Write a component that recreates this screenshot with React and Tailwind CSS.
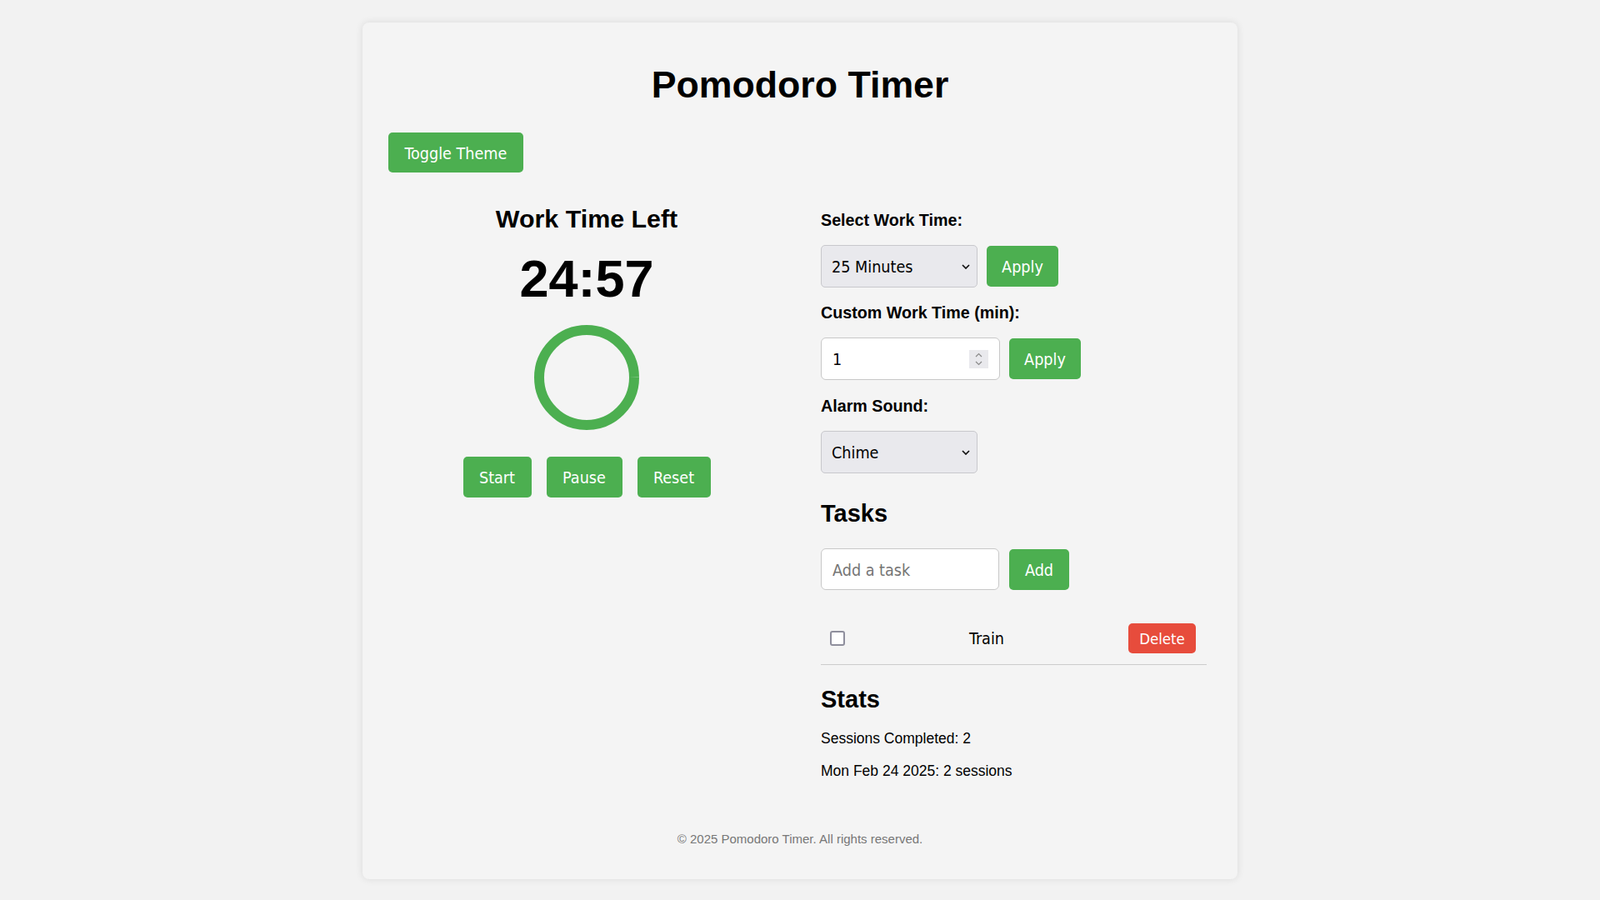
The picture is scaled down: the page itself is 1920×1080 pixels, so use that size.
import React from 'react';

const uiFont = "font-['DejaVu_Sans_Condensed','DejaVu_Sans',sans-serif]";

function GreenButton({ children, className = '' }) {
  return (
    <button
      className={`${uiFont} flex items-center justify-center rounded-[5px] bg-[#4caf50] pt-[3px] text-[19.6px] text-white ${className}`}
    >
      {children}
    </button>
  );
}

function Chevron() {
  return (
    <svg width="10" height="6" viewBox="0 0 10 6" className="shrink-0">
      <path d="M1 1l4 4 4-4" fill="none" stroke="#111" strokeWidth="1.7" />
    </svg>
  );
}

function FakeSelect({ value }) {
  return (
    <div
      className={`${uiFont} flex h-[51px] w-[188px] items-center justify-between rounded-[5px] border border-[#c8c8cc] bg-[#e9e9ed] pl-[12px] pr-[8px] text-[19.6px] text-black`}
    >
      <span className="pt-[3px]">{value}</span>
      <Chevron />
    </div>
  );
}

function ProgressRing() {
  const r = 57;
  const c = 2 * Math.PI * r;
  const remaining = 1497 / 1500;
  return (
    <svg width="126" height="126" viewBox="0 0 126 126">
      <circle
        cx="63"
        cy="63"
        r={r}
        fill="none"
        stroke="#4caf50"
        strokeWidth="12"
        strokeDasharray={c}
        strokeDashoffset={c * (1 - remaining)}
      />
    </svg>
  );
}

export default function App() {
  return (
    <div className="min-h-screen bg-[#f2f2f2] pt-[27px] pb-[24px] font-['Liberation_Sans',Arial,sans-serif] text-black">
      <div className="mx-auto w-[1050px] rounded-[8px] bg-[#f4f4f4] px-[31px] pt-[50px] pb-[40px] shadow-[0_0_10px_rgba(0,0,0,0.1)]">
        <h1 className="text-center text-[44.7px] font-bold leading-[50px]">Pomodoro Timer</h1>

        <GreenButton className="mt-[32px] h-[48px] w-[162px]">Toggle Theme</GreenButton>

        <div className="mt-[35px] flex items-start">
          {/* Timer column */}
          <div className="flex w-[476px] flex-col items-center">
            <h2 className="pt-[2px] text-[30.4px] font-bold leading-[36px]">Work Time Left</h2>
            <div className="mt-[18px] text-[63px] font-bold leading-[72px]">24:57</div>
            <div className="mt-[20px]">
              <ProgressRing />
            </div>
            <div className="mt-[32px] flex gap-[18px]">
              <GreenButton className="h-[49px] w-[82px]">Start</GreenButton>
              <GreenButton className="h-[49px] w-[91px]">Pause</GreenButton>
              <GreenButton className="h-[49px] w-[88px]">Reset</GreenButton>
            </div>
          </div>

          {/* Settings column */}
          <div className="ml-[43px] w-[463px] pt-[11px]">
            <label className="block text-[19.7px] font-bold leading-[23px]">Select Work Time:</label>
            <div className="mt-[18px] flex items-center gap-[11px]">
              <FakeSelect value="25 Minutes" />
              <GreenButton className="h-[49px] w-[86px]">Apply</GreenButton>
            </div>

            <label className="mt-[19px] block text-[19.7px] font-bold leading-[23px]">Custom Work Time (min):</label>
            <div className="mt-[18px] flex items-center gap-[11px]">
              <div
                className={`${uiFont} flex h-[51px] w-[215px] items-center justify-between rounded-[6px] border border-[#c8c8c8] bg-white pl-[13px] pr-[13px] text-[19.6px]`}
              >
                <span className="pt-[3px]">1</span>
                <div className="flex h-[22px] w-[23px] items-center justify-center bg-[#e9e9ed]">
                  <svg width="9" height="16" viewBox="0 0 9 16">
                    <path d="M1 5l3.5-3.5L8 5" fill="none" stroke="#8a8a8a" strokeWidth="1.2" />
                    <path d="M1 11l3.5 3.5L8 11" fill="none" stroke="#8a8a8a" strokeWidth="1.2" />
                  </svg>
                </div>
              </div>
              <GreenButton className="h-[49px] w-[86px]">Apply</GreenButton>
            </div>

            <label className="mt-[20px] block text-[19.7px] font-bold leading-[23px]">Alarm Sound:</label>
            <div className="mt-[18px]">
              <FakeSelect value="Chime" />
            </div>

            <h2 className="mt-[31px] text-[29px] font-bold leading-[34px]">Tasks</h2>
            <div className="mt-[25px] flex items-center gap-[12px]">
              <input
                placeholder="Add a task"
                className={`${uiFont} h-[50px] w-[214px] rounded-[6px] border border-[#c8c8c8] bg-white pl-[13px] pt-[3px] text-[19.6px] outline-none placeholder:text-[#757575]`}
              />
              <GreenButton className="h-[49px] w-[72px]">Add</GreenButton>
            </div>

            <ul className="mt-[28px]">
              <li className="flex items-center justify-between border-b border-[#cccccc] pt-[12px] pb-[13px] pl-[11px] pr-[13px]">
                <div className="h-[18px] w-[18px] rounded-[3px] border-2 border-[#8f8f9d] bg-white" />
                <span className={`${uiFont} pt-[2px] text-[19.6px]`}>Train</span>
                <button
                  className={`${uiFont} flex h-[36px] w-[81px] items-center justify-center rounded-[5px] bg-[#e74c3c] pt-[2px] text-[18.5px] text-white`}
                >
                  Delete
                </button>
              </li>
            </ul>

            <h2 className="mt-[24px] text-[29px] font-bold leading-[34px]">Stats</h2>
            <p className="mt-[20px] text-[17.5px] leading-[20px]">Sessions Completed: 2</p>
            <p className="mt-[19px] text-[17.5px] leading-[20px]">Mon Feb 24 2025: 2 sessions</p>
          </div>
        </div>

        <footer className="mt-[63px] text-center text-[15px] leading-[17px] text-[#777777]">
          © 2025 Pomodoro Timer. All rights reserved.
        </footer>
      </div>
    </div>
  );
}
